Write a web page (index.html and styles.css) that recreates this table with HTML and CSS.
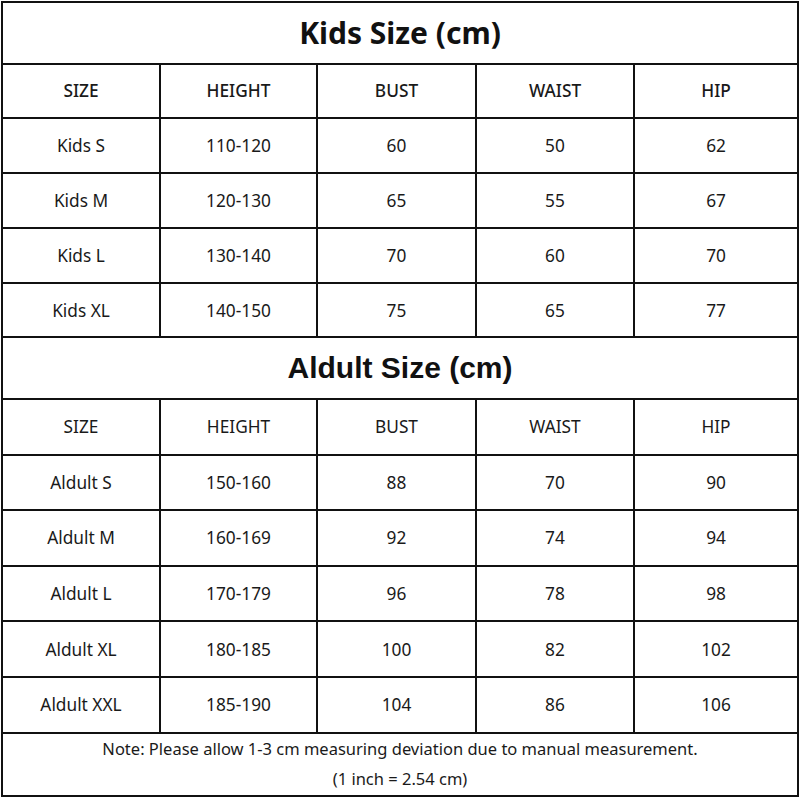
FILE: index.html
```html
<!DOCTYPE html>
<html>
<head>
<meta charset="utf-8">
<link rel="stylesheet" href="styles.css">
</head>
<body>
<table class="chart">
  <colgroup>
    <col class="c1"><col class="c2"><col class="c3"><col class="c4"><col class="c5">
  </colgroup>
  <tr class="title-row"><td colspan="5" class="title kids-title">Kids Size (cm)</td></tr>
  <tr class="row kids-row head kids-head"><td>SIZE</td><td>HEIGHT</td><td>BUST</td><td>WAIST</td><td>HIP</td></tr>
  <tr class="row kids-row"><td>Kids S</td><td>110-120</td><td>60</td><td>50</td><td>62</td></tr>
  <tr class="row kids-row"><td>Kids M</td><td>120-130</td><td>65</td><td>55</td><td>67</td></tr>
  <tr class="row kids-row"><td>Kids L</td><td>130-140</td><td>70</td><td>60</td><td>70</td></tr>
  <tr class="row kids-row"><td>Kids XL</td><td>140-150</td><td>75</td><td>65</td><td>77</td></tr>
  <tr class="title-row"><td colspan="5" class="title adult-title">Aldult Size (cm)</td></tr>
  <tr class="row head"><td>SIZE</td><td>HEIGHT</td><td>BUST</td><td>WAIST</td><td>HIP</td></tr>
  <tr class="row"><td>Aldult S</td><td>150-160</td><td>88</td><td>70</td><td>90</td></tr>
  <tr class="row"><td>Aldult M</td><td>160-169</td><td>92</td><td>74</td><td>94</td></tr>
  <tr class="row"><td>Aldult L</td><td>170-179</td><td>96</td><td>78</td><td>98</td></tr>
  <tr class="row"><td>Aldult XL</td><td>180-185</td><td>100</td><td>82</td><td>102</td></tr>
  <tr class="row"><td>Aldult XXL</td><td>185-190</td><td>104</td><td>86</td><td>106</td></tr>
  <tr class="note-row"><td colspan="5" class="note">
    <div class="note-line">Note: Please allow 1-3 cm measuring deviation due to manual measurement.</div>
    <div class="note-line">(1 inch = 2.54 cm)</div>
  </td></tr>
</table>
</body>
</html>
```
FILE: styles.css
```css
html, body {
  margin: 0;
  padding: 0;
  background: #ffffff;
}
body {
  padding: 1px;
  font-family: "Noto Sans", "Liberation Sans", sans-serif;
  color: #1a1a1a;
}
.chart {
  border-collapse: collapse;
  width: 796px;
  table-layout: fixed;
}
.c1 { width: 158px; }
.c2 { width: 157px; }
.c3 { width: 159px; }
.c4 { width: 158px; }
.c5 { width: 164px; }
.chart td {
  border: 2px solid #111;
  text-align: center;
  vertical-align: middle;
  padding: 0;
  font-size: 17.3px;
}
.chart .title-row td {
  height: 59.5px;
}
.chart .row td {
  height: 53.6px;
}
.chart .kids-row td {
  height: 52.8px;
}
.chart .title {
  font-weight: 700;
  color: #111;
}
.chart .kids-title {
  font-family: "Noto Sans", "Liberation Sans", sans-serif;
  font-size: 30px;
}
.chart .adult-title {
  font-family: "Liberation Sans", Arial, sans-serif;
  font-size: 30px;
}
.chart .kids-head td {
  font-weight: 500;
}
.chart .note-row td {
  height: 61px;
}
.chart .note {
  font-size: 16.5px;
}
.note-line {
  line-height: 30.5px;
}
```
